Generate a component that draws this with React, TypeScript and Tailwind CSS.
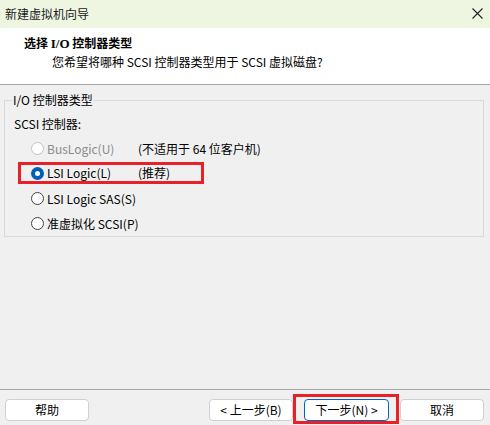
import React from "react";

function Radio({ checked = false, disabled = false }: { checked?: boolean; disabled?: boolean }) {
  if (checked) {
    return (
      <span className="w-[13px] h-[13px] rounded-full bg-[#005fb8] flex items-center justify-center shrink-0">
        <span className="w-[5px] h-[5px] rounded-full bg-white" />
      </span>
    );
  }
  return (
    <span
      className={
        "w-[13px] h-[13px] rounded-full border bg-white shrink-0 " +
        (disabled ? "border-[#c4c4c4] bg-[#f5f5f5]" : "border-[#444444]")
      }
    />
  );
}

export default function App() {
  return (
    <div className="w-[490px] h-[425px] flex flex-col bg-[#f0f0f0] text-[12px] leading-[16px] text-black overflow-hidden font-['Noto_Sans_CJK_SC','Noto_Sans',sans-serif]">
      {/* Title bar */}
      <div className="h-[28px] bg-[#eef6e2] flex items-center justify-between pl-[5px] pr-[7px] shrink-0">
        <span className="text-[#1a1a1a]">新建虚拟机向导</span>
        <svg width="11" height="11" viewBox="0 0 11 11" className="mt-[-2px]">
          <path d="M0.5 0.5 L10.5 10.5 M10.5 0.5 L0.5 10.5" stroke="#222" strokeWidth="1.1" />
        </svg>
      </div>

      {/* Header */}
      <div className="h-[57px] bg-white border-b border-[#a8a8a8] pt-[7px] shrink-0">
        <div className="pl-[24px] font-bold">
          选择 <span className="font-['Liberation_Serif',serif] text-[13px]">I/O</span> 控制器类型
        </div>
        <div className="pl-[52px] mt-[2px]">您希望将哪种 SCSI 控制器类型用于 SCSI 虚拟磁盘?</div>
      </div>

      {/* Body */}
      <div className="flex-1 pl-[4px] pr-[6px]">
        <fieldset className="mt-[7px] border border-[#d9d9d9]">
          <legend className="ml-[7px] px-[1px]">I/O 控制器类型</legend>
          <div className="pl-[9px] mt-[8px]">SCSI 控制器:</div>
          <div className="flex flex-col mt-[4px]">
            <div className="h-[25px] flex items-center pl-[26px]">
              <Radio disabled />
              <span className="ml-[3px] w-[91px] text-[#8a8a8a]">BusLogic(U)</span>
              <span>(不适用于 64 位客户机)</span>
            </div>
            <div className="h-[25px] flex items-start">
              <div className="mt-[1px] ml-[13px] w-[186px] h-[22px] border-[3px] border-[#e8202a] flex items-center pl-[10px]">
                <Radio checked />
                <span className="ml-[3px] w-[91px]">LSI Logic(L)</span>
                <span>(推荐)</span>
              </div>
            </div>
            <div className="h-[25px] flex items-center pl-[26px]">
              <Radio />
              <span className="ml-[3px]">LSI Logic SAS(S)</span>
            </div>
            <div className="h-[25px] flex items-center pl-[26px]">
              <Radio />
              <span className="ml-[3px]">准虚拟化 SCSI(P)</span>
            </div>
          </div>
        </fieldset>
      </div>

      {/* Footer */}
      <div className="h-[36px] border-t border-[#a8a8a8] flex items-start pt-[4px] pl-[5px] pr-[6px] shrink-0">
        <button className="mt-[5px] w-[84px] h-[22px] bg-white border border-[#d0d0d0] rounded-[4px] flex items-center justify-center">
          帮助
        </button>
        <div className="flex-1" />
        <button className="mt-[5px] w-[84px] h-[22px] bg-white border border-[#d0d0d0] rounded-[4px] flex items-center justify-center">
          &lt; 上一步(B)
        </button>
        <div className="w-[106px] h-[30px] border-[3px] border-[#e8202a] pl-[8px] pt-[2px]">
          <button className="w-[85px] h-[22px] bg-white border border-[#0067c0] rounded-[4px] flex items-center justify-center">
            下一步(N) &gt;
          </button>
        </div>
        <button className="ml-[1px] mt-[5px] w-[84px] h-[22px] bg-white border border-[#d0d0d0] rounded-[4px] flex items-center justify-center">
          取消
        </button>
      </div>
    </div>
  );
}
